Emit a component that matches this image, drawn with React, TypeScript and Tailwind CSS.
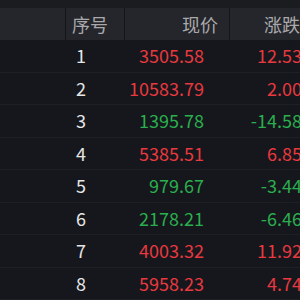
import React from 'react';

const rows = [
  { no: 1, price: '3505.58', change: '12.53', up: true },
  { no: 2, price: '10583.79', change: '2.00', up: true },
  { no: 3, price: '1395.78', change: '-14.58', up: false },
  { no: 4, price: '5385.51', change: '6.85', up: true },
  { no: 5, price: '979.67', change: '-3.44', up: false },
  { no: 6, price: '2178.21', change: '-6.46', up: false },
  { no: 7, price: '4003.32', change: '11.92', up: true },
  { no: 8, price: '5958.23', change: '4.74', up: true },
];

export default function App() {
  return (
    <div
      className="w-[300px] h-[300px] overflow-hidden bg-[#15171d]"
      style={{ fontFamily: '"Noto Sans CJK SC", "Noto Sans", sans-serif' }}
    >
      <div className="w-[330px]">
        <div className="h-2 bg-[#1b1c20]" />
        <div className="flex h-8 bg-[#25262b] text-[18px] text-[#a9a9ab] items-center">
          <div className="w-[66px] h-full border-r border-[#141519]" />
          <div className="w-[59px] h-full border-r border-[#141519] flex items-center pl-[6px]">序号</div>
          <div className="w-[105px] h-full border-r border-[#141519] flex items-center justify-end pr-[11px]">现价</div>
          <div className="flex-1 h-full flex items-center pl-[34px]">涨跌幅</div>
        </div>
        {rows.map((r) => (
          <div
            key={r.no}
            className="flex h-[32.5px] items-center text-[18px] border-b border-[#1d1f26]"
          >
            <div className="w-[66px]" />
            <div className="w-[59px] pl-[10px] text-[#e6e6e6]">{r.no}</div>
            <div className={`w-[105px] text-right pr-[26px] ${r.up ? 'text-[#e8393f]' : 'text-[#2bae4d]'}`}>
              {r.price}
            </div>
            <div className={`w-[72px] text-right ${r.up ? 'text-[#e8393f]' : 'text-[#2bae4d]'}`}>
              {r.change}
            </div>
          </div>
        ))}
      </div>
    </div>
  );
}
